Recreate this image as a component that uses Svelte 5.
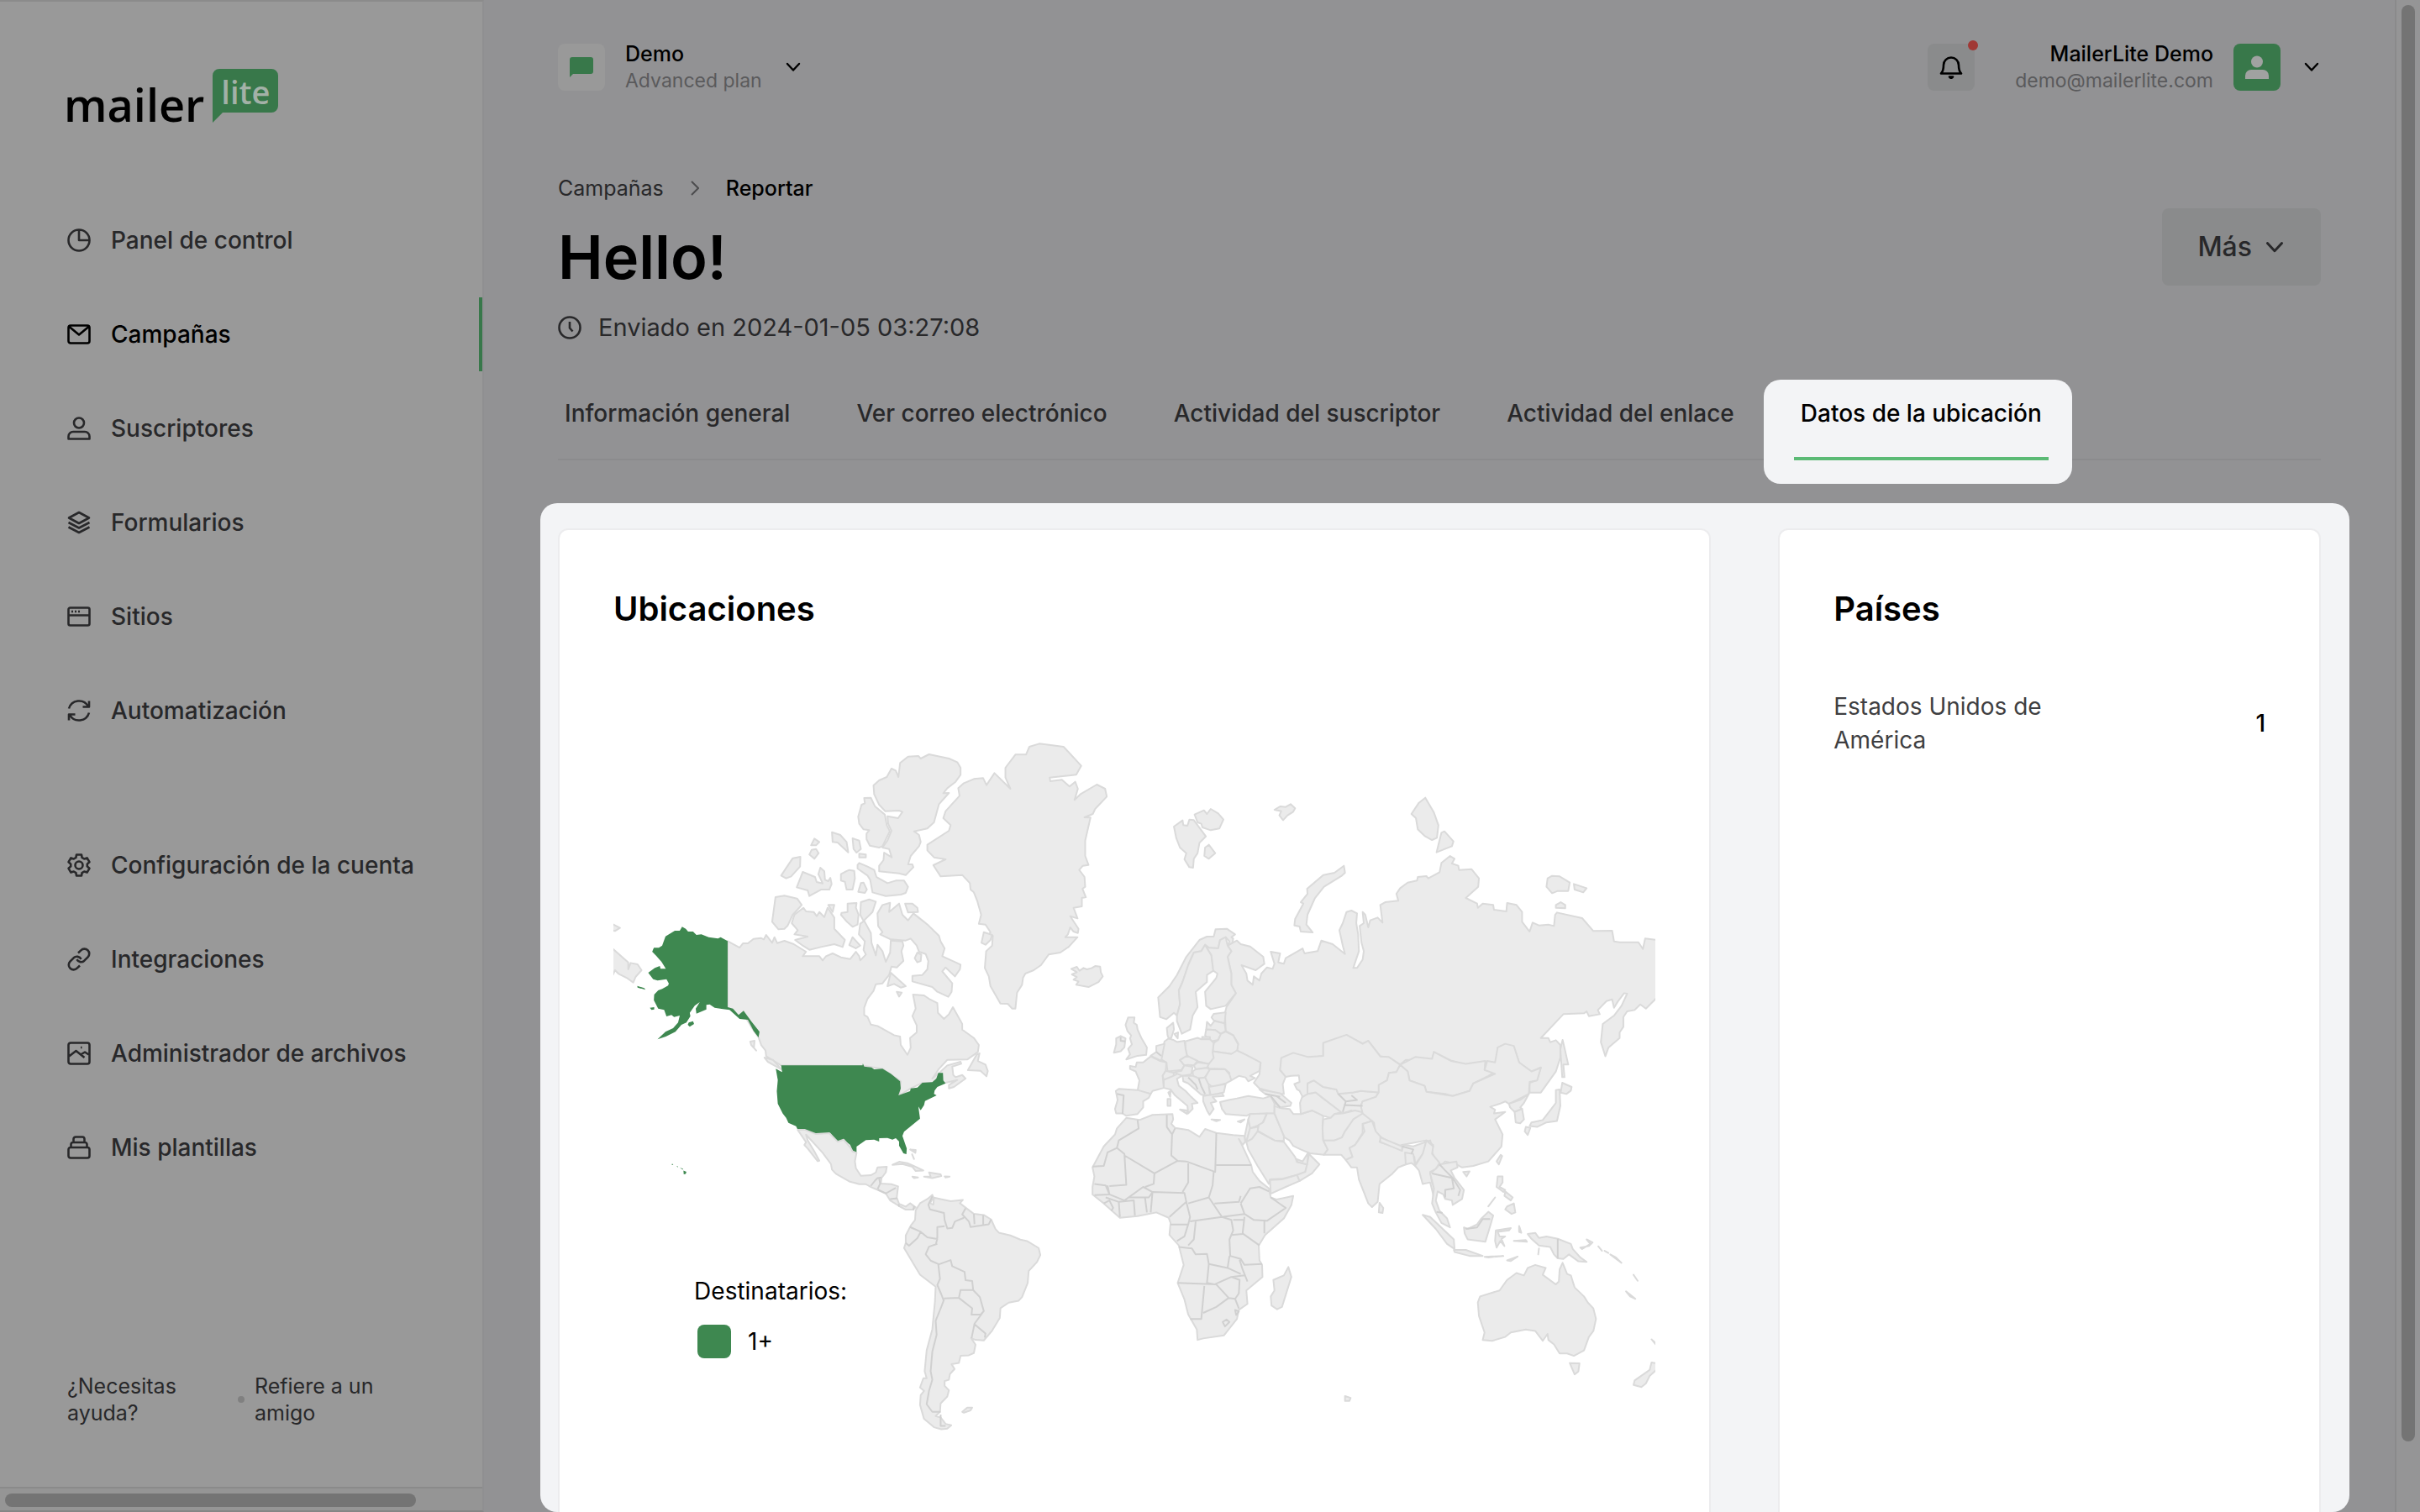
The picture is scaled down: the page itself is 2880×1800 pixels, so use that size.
<script lang="ts">
	type Item = { label: string; icon: string; active?: boolean };

	const icons: Record<string, string> = {
		chart: 'M14 1.5A12.5 12.5 0 1 0 26.5 14 12.5 12.5 0 0 0 14 1.5ZM14 1.5V14H26.5',
		mail: 'M4 3.5H24A2.5 2.5 0 0 1 26.5 6V22A2.5 2.5 0 0 1 24 24.5H4A2.5 2.5 0 0 1 1.5 22V6A2.5 2.5 0 0 1 4 3.5ZM2.5 5 14 14.5 25.5 5',
		user: 'M14 1.5A6 6 0 1 0 20 7.5 6 6 0 0 0 14 1.5ZM1.5 26.5V23.5A5.5 5.5 0 0 1 7 18H21A5.5 5.5 0 0 1 26.5 23.5V26.5Z',
		layers: 'M14 2 26 8.5 14 15 2 8.5ZM1.5 14 14 20.5 26.5 14M1.5 19.5 14 26 26.5 19.5',
		browser: 'M3.5 3.5H24.5A2 2 0 0 1 26.5 5.5V22.5A2 2 0 0 1 24.5 24.5H3.5A2 2 0 0 1 1.5 22.5V5.5A2 2 0 0 1 3.5 3.5ZM1.5 12.5H26.5M5 8H7M9 8H11M13 8H15',
		refresh: 'M2 11.5A12.5 12.5 0 0 1 25 9M26 2.5V9.5H18.5M26 16.5A12.5 12.5 0 0 1 3 19M2 25.5V18.5H9.5',
		gear: 'M11 1.5H17L17.6 4.9 20.2 6.5 23.6 5.4 26.4 10.2 23.8 12.6V15.4L26.4 17.8 23.6 22.6 20.2 21.5 17.6 23.1 17 26.5H11L10.4 23.1 7.8 21.5 4.4 22.6 1.6 17.8 4.2 15.4V12.6L1.6 10.2 4.4 5.4 7.8 6.5 10.4 4.9ZM14 9.5A4.5 4.5 0 1 0 18.5 14 4.5 4.5 0 0 0 14 9.5Z',
		link: 'M13 6.5 16.3 3.4A5.7 5.7 0 0 1 24.6 11.4L20.3 15.7A5.7 5.7 0 0 1 11.4 14.2M15 21.5 11.7 24.6A5.7 5.7 0 0 1 3.4 16.6L7.7 12.3A5.7 5.7 0 0 1 16.6 13.8',
		image: 'M4 1.5H24A2.5 2.5 0 0 1 26.5 4V24A2.5 2.5 0 0 1 24 26.5H4A2.5 2.5 0 0 1 1.5 24V4A2.5 2.5 0 0 1 4 1.5ZM1.5 18 10.5 11 20.5 19M16 15.5 21 12.5 26.5 16M16 7H17.5',
		stack: 'M4 14H24A2.5 2.5 0 0 1 26.5 16.5V24A2.5 2.5 0 0 1 24 26.5H4A2.5 2.5 0 0 1 1.5 24V16.5A2.5 2.5 0 0 1 4 14ZM4.5 14V10.5A2.5 2.5 0 0 1 7 8H21A2.5 2.5 0 0 1 23.5 10.5V14M7.5 8V4A2.5 2.5 0 0 1 10 1.5H18A2.5 2.5 0 0 1 20.5 4V8',
		clock: 'M14 1.5A12.5 12.5 0 1 0 26.5 14 12.5 12.5 0 0 0 14 1.5ZM14 7V14.5L17.5 18.5'
	};

	const menus: Item[][] = [
		[
			{ label: 'Panel de control', icon: 'chart' },
			{ label: 'Campañas', icon: 'mail', active: true },
			{ label: 'Suscriptores', icon: 'user' },
			{ label: 'Formularios', icon: 'layers' },
			{ label: 'Sitios', icon: 'browser' },
			{ label: 'Automatización', icon: 'refresh' }
		],
		[
			{ label: 'Configuración de la cuenta', icon: 'gear' },
			{ label: 'Integraciones', icon: 'link' },
			{ label: 'Administrador de archivos', icon: 'image' },
			{ label: 'Mis plantillas', icon: 'stack' }
		]
	];

	const tabs = [
		'Información general',
		'Ver correo electrónico',
		'Actividad del suscriptor',
		'Actividad del enlace',
		'Datos de la ubicación'
	];
	const currentTab = 'Datos de la ubicación';

	const countries = [{ name: 'Estados Unidos de América', count: 1 }];

	// Each region of the map keeps its own grid, placed by the transform.
	const regions = [
		{
			name: 'north-america',
			transform: 'translate(-10 0) scale(0.3954 0.3333)',
			land: [
				// Canada
				'M369,784 405,807 415,792 430,792 447,776 469,773 478,778 485,762 503,790 510,770 518,791 540,783 568,795 605,822 595,838 645,838 655,853 665,838 685,828 710,842 738,848 755,822 765,838 768,853 785,832 778,815 782,785 764,760 768,722 780,712 800,755 802,790 815,835 820,797 835,820 845,858 858,825 860,782 895,785 898,800 892,820 898,855 878,878 862,875 855,905 835,935 815,938 808,962 790,990 780,1022 780,1048 790,1055 800,1082 820,1087 870,1120 888,1125 890,1155 910,1190 920,1165 918,1130 938,1110 938,1085 925,1052 935,1025 927,975 960,978 975,990 1000,1005 1002,1040 1020,1062 1035,1045 1047,1020 1075,1080 1075,1100 1110,1130 1125,1155 1122,1180 1090,1207 1030,1208 1005,1240 985,1275 1010,1250 1030,1228 1070,1215 1072,1222 1045,1232 1048,1262 1055,1270 1075,1262 1085,1275 1050,1305 1035,1310 1035,1298 1060,1280 1025,1290 985,1290 955,1290 920,1310 885,1336 890,1285 835,1240 780,1230 530,1228 485,1195 483,1175 470,1155 462,1128 440,1090 425,1060 400,1050 369,1020Z',
				'M480,1200 505,1208 532,1243 515,1232 490,1215Z',
				'M437,1143 450,1140 448,1165 455,1175 440,1155Z',
				'M1127,1185 1118,1190 1092,1245 1130,1247 1148,1267 1152,1248 1145,1225 1122,1212Z',
				// Ellesmere and Axel Heiberg
				'M950,132 943,123 912,125 888,148 883,198 875,175 862,168 848,198 825,210 808,228 810,260 825,297 843,320 885,318 895,323 882,345 850,338 852,365 862,390 850,425 835,450 855,455 863,485 840,468 838,495 825,515 825,535 885,542 905,548 928,520 925,510 912,510 920,480 945,445 950,430 945,405 930,392 970,382 990,360 1005,295 1035,255 1018,256 1030,238 1055,215 1070,190 1070,165 1060,145 1035,132 975,117Z',
				'M780,273 800,272 812,302 842,332 848,370 857,392 835,445 825,450 797,443 787,420 787,400 795,388 778,385 765,365 762,340 772,297 782,292Z',
				// Greenland
				'M1205,165 1235,118 1267,118 1277,90 1307,79 1380,90 1433,158 1418,190 1338,200 1340,213 1375,208 1398,232 1415,215 1423,240 1413,280 1430,260 1480,225 1505,240 1510,268 1475,312 1468,330 1443,342 1461,343 1445,425 1445,480 1455,512 1438,515 1427,530 1443,555 1445,590 1437,597 1447,627 1435,630 1435,660 1410,665 1422,703 1400,695 1425,740 1423,755 1410,750 1400,735 1393,760 1385,770 1422,770 1395,805 1370,825 1335,832 1312,870 1290,888 1265,900 1258,915 1255,940 1240,968 1235,1025 1225,1025 1212,1008 1190,1007 1160,945 1155,910 1143,880 1147,820 1165,800 1167,765 1155,762 1160,752 1145,725 1125,722 1132,690 1120,640 1110,610 1100,600 1098,577 1075,548 1010,553 988,513 1025,492 990,485 970,460 970,440 1035,390 1040,370 1018,345 1025,320 1067,265 1063,238 1080,220 1110,205 1138,202 1148,227 1172,184 1220,240 1205,200Z',
				'M1140,752 1165,762 1160,780 1145,797 1133,790Z',
				// Iceland
				'M1403,883 1420,876 1428,890 1440,880 1450,885 1465,880 1475,873 1490,875 1492,895 1498,910 1485,930 1455,948 1418,940 1425,928 1410,922 1420,912 1405,903 1420,895Z',
				// Baffin and the Arctic islands
				'M820,685 835,655 858,647 855,680 885,650 895,690 912,710 928,685 960,715 975,730 1005,765 1010,785 1022,810 1015,838 1070,868 1068,885 1053,910 1025,878 1015,892 1045,935 1043,965 1033,983 1000,965 985,948 925,928 925,908 955,905 970,885 973,855 965,830 945,822 938,800 920,775 905,782 860,778 828,760 835,752 822,730Z',
				'M940,825 952,832 950,855 940,860 932,845Z',
				'M860,897 905,945 890,950 870,937 850,945Z',
				'M878,965 893,968 885,982Z',
				'M903,650 925,650 940,665 942,680 912,682Z',
				'M760,512 765,505 790,518 810,530 817,555 850,577 875,568 900,568 912,590 905,612 890,618 845,623 805,610 798,565 790,550 760,525Z',
				'M725,535 735,530 750,533 752,560 745,600 727,600 722,572 710,568 710,545Z',
				'M770,577 778,575 788,600 782,612 762,608Z',
				'M745,417 765,425 770,455 757,468 748,455Z',
				'M765,472 785,475 785,485 765,485Z',
				'M683,395 708,405 727,430 732,467 700,432 685,430Z',
				'M630,418 645,430 635,442 620,442Z',
				'M622,458 635,455 643,470 630,490 615,475Z',
				'M565,488 588,483 587,518 560,553 545,560 530,550Z',
				'M595,537 632,555 637,573 655,578 642,545 648,522 660,535 662,565 672,570 678,558 682,580 675,600 650,600 615,623 610,603 577,592Z',
				'M513,627 540,622 578,632 592,655 565,690 550,728 540,740 522,742 503,715Z',
				'M597,665 605,678 628,680 637,695 645,680 660,698 670,665 690,700 690,740 722,780 715,805 690,795 650,805 615,815 595,800 572,780 610,768 570,760 580,745 562,720 570,690Z',
				'M730,650 757,648 755,665 763,690 760,725 745,733 728,715 710,690 712,683 730,680Z',
				'M770,645 795,635 815,643 805,680 778,712 768,690Z',
				'M745,770 768,800 755,810 735,798Z',
				'M672,655 690,655 685,680Z',
				// Chukotka, wrapped over the antimeridian
				'M20,808 70,860 70,885 77,862 98,867 110,888 92,912 85,932 65,915 40,900 30,888 20,915Z',
				'M20,722 45,737 30,748 20,745Z'
			],
			borders: '',
			active: [
				// Alaska
				'M369,784 348,770 340,775 312,770 290,760 275,762 265,750 250,750 243,740 232,733 225,747 210,747 182,767 172,800 162,808 147,808 142,822 155,838 170,858 183,883 167,883 165,873 150,880 130,897 145,920 158,925 185,920 192,935 190,943 172,955 160,960 148,975 147,995 160,1025 178,1030 185,1053 200,1048 208,1055 225,1050 220,1075 205,1095 182,1108 158,1135 183,1125 212,1108 230,1083 245,1075 257,1052 255,1040 270,1015 285,1002 273,1025 275,1043 305,1028 305,1012 315,1010 330,1022 355,1027 375,1030 405,1062 430,1065 447,1105 462,1128 465,1108 440,1070 417,1033 402,1048 385,1025 369,1020Z',
				'M252,1075 265,1070 268,1080 255,1090 249,1083Z',
				'M97,944 118,952 122,958 98,950Z',
				'M135,1022 148,1020 148,1028 140,1030Z',
				// Contiguous states
				'M530,1228 775,1228 776,1221 780,1232 802,1235 810,1242 835,1240 860,1258 888,1285 890,1310 883,1335 918,1320 920,1310 940,1307 955,1290 985,1288 997,1275 1003,1255 1017,1255 1018,1282 1025,1292 1000,1305 992,1318 990,1330 998,1335 963,1355 960,1370 950,1388 943,1375 948,1418 900,1465 895,1480 908,1525 907,1545 898,1542 885,1515 885,1500 875,1488 865,1493 850,1487 825,1488 825,1500 810,1493 785,1495 757,1518 757,1540 745,1535 738,1512 718,1493 705,1502 692,1492 678,1470 660,1472 635,1474 602,1458 580,1458 575,1445 552,1433 545,1415 535,1400 520,1365 517,1320 520,1280 514,1240 530,1250 533,1252Z'
			]
		},
		{
			name: 'south-america',
			transform: 'translate(-10 380) scale(0.3954 0.3333)',
			land: [
				'M580,318 602,318 635,333 675,330 700,360 718,353 738,380 745,395 757,400 752,430 755,455 770,482 800,480 815,470 820,452 848,450 845,470 832,490 830,510 862,512 882,520 878,560 885,582 905,592 918,580 935,595 925,603 905,603 885,590 858,570 845,545 800,522 785,512 765,512 735,502 695,475 683,460 680,440 655,400 605,335 610,355 630,395 645,428 640,430 610,385 600,372 605,362Z',
				'M865,443 885,432 910,437 930,447 958,463 935,465 925,450 895,440Z',
				'M960,485 980,485 975,470 1010,477 1012,483 985,490Z',
				'M925,485 942,488 930,490Z',
				'M1022,484 1037,485 1025,488Z',
				'M918,388 935,390 934,400Z',
				'M924,405 930,422Z',
				'M935,605 948,580 970,565 985,550 988,560 978,580 988,585 990,560 1010,565 1040,573 1077,568 1068,580 1090,600 1110,618 1140,622 1162,638 1175,672 1185,685 1220,695 1250,710 1270,715 1305,740 1310,765 1300,790 1275,822 1272,865 1255,915 1245,928 1215,935 1190,955 1188,990 1165,1035 1140,1070 1115,1068 1102,1062 1115,1085 1110,1115 1095,1123 1070,1125 1065,1150 1043,1155 1052,1172 1038,1190 1035,1210 1022,1215 1022,1232 1035,1248 1030,1270 1010,1295 1008,1325 995,1340 1010,1345 1025,1368 1042,1373 1030,1385 1012,1387 990,1380 960,1350 948,1300 950,1265 960,1250 948,1238 958,1205 968,1205 962,1180 968,1105 985,1030 993,930 995,878 948,835 900,740 905,722 905,695 920,660 933,640Z',
				'M1075,1325 1090,1310 1105,1310 1100,1320 1080,1328Z'
			],
			borders:
				'M832,488 820,490 812,500 800,518M825,490 828,510 820,530M822,532 845,545 875,525M858,565 880,562M883,583 885,592M930,590 928,605M985,555 973,585 978,602 1020,615 1022,640 1030,670 1045,668 1053,645 1080,632M1085,598 1075,620 1095,645 1100,665 1130,660 1155,655 1162,638M1110,618 1112,655M1138,622 1138,655M1022,662 1000,665 1000,705M918,665 950,682 970,702 1000,708 995,728M950,682 940,705 915,732 905,722M1000,725 975,735 965,762 980,785 1005,798 1040,783 1045,805 1082,825 1085,855 1105,858 1108,890M1003,798 1008,850 1000,872 1012,905 1020,930M1108,890 1070,890 1065,918 1020,920M1065,918 1105,955 1103,978 1130,978 1140,965 1135,945 1128,915 1108,890M1140,965 1112,1010 1103,1062M1112,1012 1145,1045 1143,1060M1020,925 1012,950 995,1000 998,1050 985,1110 980,1180 985,1210 975,1250 968,1298 985,1325 1010,1325M1010,1335 1010,1375 1025,1375',
			active: [
				'M236,463 245,468 243,475 237,477Z',
				'M201,440 205,440 205,443 201,443Z',
				'M215,447 220,449 219,452Z',
				'M225,453 235,457 234,460Z'
			]
		},
		{
			name: 'northern-eurasia',
			transform: 'translate(550 0) scale(0.4464 0.3333)',
			land: [
				// Russia
				'M405,800 430,782 440,795 465,803 500,840 503,865 480,888 442,870 455,900 458,925 472,940 475,910 490,925 495,900 510,878 525,883 530,865 520,822 545,828 540,860 555,865 560,845 605,810 610,828 645,820 655,782 685,795 718,830 712,800 703,745 712,720 722,680 735,675 750,685 748,720 753,760 755,820 740,880 750,880 765,850 768,820 762,790 757,730 768,720 765,680 772,690 780,735 785,710 805,700 818,718 812,655 825,645 860,640 855,615 865,595 885,575 910,568 912,555 935,552 940,560 970,538 975,505 998,480 1010,490 1003,507 1020,515 1022,530 1055,527 1075,560 1073,590 1040,630 1070,650 1072,665 1085,650 1113,655 1115,672 1148,678 1150,648 1175,655 1190,680 1190,715 1210,750 1218,718 1235,728 1260,725 1275,730 1278,690 1283,682 1350,702 1380,748 1430,747 1435,785 1450,788 1500,788 1512,812 1518,775 1550,780 1550,985 1520,1025 1505,1010 1490,1030 1470,1035 1460,1055 1460,1090 1450,1110 1450,1130 1420,1165 1412,1195 1400,1145 1405,1080 1435,1050 1455,1015 1470,972 1462,970 1445,1000 1435,1022 1430,992 1415,998 1392,1030 1397,1045 1368,1052 1362,1035 1355,1042 1300,1045 1240,1130 1260,1130 1265,1145 1280,1138 1292,1155 1292,1200 1280,1250 1240,1325 1210,1325 1210,1290 1230,1280 1240,1235 1215,1250 1182,1218 1170,1170 1145,1152 1125,1165 1125,1200 1118,1220 1090,1215 1040,1225 1000,1210 955,1180 950,1210 880,1208 865,1225 835,1200 812,1195 780,1140 765,1150 722,1120 660,1150 660,1195 620,1200 580,1185 548,1215 545,1245 560,1268 552,1295 555,1330 545,1330 490,1310 475,1290 490,1260 493,1220 455,1205 430,1180 433,1150 420,1120 400,1105 398,1040 402,1020 427,970 415,940 415,900 405,840 415,820Z',
				'M1298,1137 1303,1165 1313,1225 1300,1225 1303,1270 1297,1270 1292,1170Z',
				'M1297,1290 1322,1305 1320,1318 1308,1330 1293,1325Z',
				'M715,515 718,540 710,550 662,590 638,630 618,690 615,725 632,753 600,750 597,732 583,728 585,705 607,650 600,645 618,615 617,597 660,548 690,540Z',
				'M262,375 285,353 287,370 298,372 303,350 315,352 347,410 330,433 325,470 315,490 313,522 303,520 290,492 295,470 278,450 268,415Z',
				'M317,332 342,317 350,330 360,312 380,328 394,350 383,382 360,388 338,378 335,365 325,360Z',
				'M355,440 372,470 355,490 343,480 345,450Z',
				'M530,315 545,303 560,305 573,295 585,310 580,322 565,335 553,352 543,335 548,320Z',
				'M932,272 955,325 967,370 963,415 950,423 930,408 912,385 907,345 895,330 915,290Z',
				'M983,392 1007,428 1003,445 962,467 975,397Z',
				'M1258,560 1270,551 1290,553 1317,575 1313,605 1285,605 1270,613 1255,590Z',
				'M1328,580 1362,595 1353,610 1330,600Z',
				'M1280,655 1293,645 1305,655 1305,667 1280,665Z',
				// Norway, Sweden, Finland
				'M225,1055 220,985 250,945 270,905 295,840 330,780 350,768 368,768 373,742 403,740 425,760 415,770 420,775 418,790 405,800 410,785 400,770 385,780 380,810 355,808 345,797 335,820 315,825 300,870 285,930 275,960 278,1010 270,1050 262,1040 242,1063Z',
				'M345,797 362,835 367,890 350,905 350,930 320,965 325,1020 312,1050 305,1100 283,1115 270,1070 270,1050 278,1010 275,960 285,930 300,870 315,825 335,820Z',
				'M400,770 385,780 380,810 355,808 345,797 362,835 367,890 378,900 375,915 345,965 348,1015 360,1027 400,1015 427,970 415,940 415,900 405,840 415,820 405,800Z'
			],
			borders: '',
			active: []
		},
		{
			name: 'europe-africa-asia-oceania',
			transform: 'translate(550 320) scale(0.4464 0.3571)',
			land: [
				// Europe
				'M368,78 400,73 397,110 368,100 362,90Z',
				'M348,130 350,105 360,118 370,102 397,110 400,135 387,145 372,132Z',
				'M348,130 372,132 387,145 380,165 362,170 345,150Z',
				'M337,155 358,155 358,163 337,162Z',
				'M400,137 420,150 433,180 430,205 415,212 365,203 368,175 380,165 387,145Z',
				'M365,203 415,212 430,200 455,215 493,240 490,268 465,285 478,292 460,303 453,290 435,285 415,300 405,290 410,275 398,262 355,260 350,250 360,235Z',
				'M292,170 325,158 335,163 358,163 368,175 365,207 368,225 355,245 320,235 297,218 293,195Z',
				'M237,170 248,160 260,165 270,172 290,168 293,195 297,218 278,232 290,250 282,265 245,270 242,240 228,230 230,200Z',
				'M245,150 243,125 260,108 262,130 255,158 248,160Z',
				'M263,145 273,140 272,160Z',
				'M237,178 232,210 228,235 200,218 215,205 215,185Z',
				'M200,220 225,235 242,240 240,268 232,285 235,325 205,335 200,345 165,335 170,300 160,270 145,262 145,252 160,255 163,240 180,240Z',
				'M115,328 165,332 200,345 195,358 180,370 180,390 165,412 135,418 125,410 108,410 105,395 112,365 107,335Z',
				'M140,90 157,90 155,108 163,115 165,130 175,158 190,190 188,215 165,218 135,230 145,213 140,195 150,180 145,160 148,150 138,135 133,115Z',
				'M120,152 133,160 130,190 120,203 102,208 108,180 108,160Z',
				'M232,285 240,268 262,275 260,290 235,298Z',
				'M235,325 235,298 260,285 275,275 285,283 270,295 275,318 293,335 308,355 325,375 310,378 312,395 300,410 298,385 265,350 253,330Z',
				'M278,397 298,400 297,412Z',
				'M245,362 253,362 253,385 245,385Z',
				'M247,340 253,335 252,355Z',
				'M278,232 297,218 325,235 315,250 300,248 290,250Z',
				'M262,273 282,268 290,250 312,255 308,280 285,285Z',
				'M315,250 325,240 355,245 350,258 320,263Z',
				'M312,270 320,263 350,258 358,265 345,290 328,293 313,285Z',
				'M345,290 358,263 398,262 410,280 415,300 400,310 365,322 352,310Z',
				'M285,285 313,285 328,293 345,290 355,315 358,350 335,348 300,310 287,303Z',
				'M355,322 400,312 395,340 360,350Z',
				'M340,352 390,343 395,352 365,355 375,370 360,375 368,395 357,415 350,400 340,370Z',
				'M362,430 385,432 375,436Z',
				'M432,437 450,430 440,440Z',
				// Turkey and the Caucasus
				'M385,372 408,365 430,360 460,352 500,360 520,352 530,375 530,410 465,412 455,418 400,412 390,395Z',
				'M490,330 545,343 575,375 572,385 545,390 530,375 520,352 505,345Z',
				// Middle East
				'M465,412 510,410 497,445 465,460 460,430Z',
				'M460,430 465,460 455,505 450,490Z',
				'M465,460 485,455 488,468 470,495 455,505Z',
				'M510,410 530,410 540,440 555,485 555,502 530,500 485,468 488,448 500,440Z',
				'M455,505 470,495 485,470 530,500 555,505 570,530 585,555 590,572 617,580 612,605 590,615 550,628 518,630 515,645 485,585 460,530Z',
				'M518,632 550,630 590,615 597,635 560,655 520,678Z',
				'M617,580 622,545 650,580 630,610 597,635 590,615 612,605Z',
				'M588,562 605,570 620,540 617,580 592,572Z',
				'M530,385 545,392 570,395 580,412 600,412 630,400 660,418 658,450 660,500 672,530 662,548 625,543 600,530 580,518 570,500 557,490 540,440 530,410Z',
				// Central Asia
				'M600,412 598,375 605,350 618,345 640,340 660,360 712,405 690,412 680,425 660,418 630,400Z',
				'M618,345 618,310 635,300 660,322 695,330 700,345 740,340 760,335 808,340 800,355 765,370 760,385 770,405 745,410 735,400 712,410 660,360 640,340Z',
				'M545,265 548,225 580,208 620,222 660,218 660,175 722,148 765,178 780,168 812,220 835,222 865,248 855,272 835,275 830,300 808,315 808,340 760,335 740,340 700,345 695,330 660,322 635,300 618,310 618,345 605,355 597,335 590,330 583,312 597,305 595,283 575,285 560,288Z',
				'M660,430 680,425 690,412 712,410 745,400 770,408 740,430 735,455 718,470 710,490 690,500 660,500 658,460Z',
				'M662,548 672,530 660,500 690,500 710,490 718,470 740,430 765,410 795,435 765,445 765,475 745,515 730,525 738,555 720,565 708,548Z',
				// Mongolia and China
				'M865,248 905,222 950,228 955,205 1000,235 1040,245 1092,235 1090,265 1118,272 1100,285 1060,310 1050,335 1005,352 985,345 935,338 930,318 890,300 885,270Z',
				'M865,248 885,270 890,300 930,318 935,338 1005,352 1050,335 1060,310 1118,278 1090,265 1097,235 1118,240 1125,190 1145,178 1168,185 1182,240 1215,270 1240,258 1230,300 1210,305 1208,345 1155,378 1145,370 1130,378 1105,388 1118,398 1115,410 1145,405 1118,430 1138,480 1135,520 1100,570 1060,585 1030,590 1015,580 985,570 970,590 950,540 953,515 935,500 870,515 860,520 815,490 800,480 795,440 765,410 760,385 765,370 800,355 808,340 808,315 830,300 835,275 855,272Z',
				// Korea, Japan, Taiwan, Hainan
				'M1155,378 1185,365 1208,345 1195,375 1185,390 1190,395 1170,405 1158,390Z',
				'M1170,405 1190,395 1195,430 1185,443 1173,440Z',
				'M1280,332 1290,330 1292,385 1283,435 1255,440 1230,455 1210,452 1215,440 1245,432 1265,400 1280,375Z',
				'M1200,455 1212,458 1205,482 1197,470Z',
				'M1033,605 1050,603 1042,620Z',
				'M1133,548 1137,552 1128,580 1122,570Z',
				// India and its neighbours
				'M720,565 738,555 730,525 745,515 770,470 765,445 790,435 800,470 815,490 810,505 870,530 875,515 900,520 945,500 950,520 925,545 905,580 903,555 880,550 880,580 860,590 845,610 810,645 805,705 790,722 780,710 755,630 750,590 735,590Z',
				'M812,490 870,520 870,535 812,505Z',
				'M878,540 900,545 905,585 895,575 880,580Z',
				'M810,708 820,725 818,742 808,740Z',
				'M905,585 925,545 935,500 953,520 950,545 970,575 960,595 945,605 950,640 957,660 955,690 945,640 925,645 915,600Z',
				'M960,595 970,580 1015,570 1018,590 1000,600 1010,625 1035,665 1030,695 1005,715 1003,700 985,695 980,680 965,670 960,700 970,735 990,760 998,790 975,775 960,740 950,710 955,660 945,610Z',
				// Indonesia, Borneo, Philippines
				'M925,748 945,755 1008,830 1010,862 990,845 960,795Z',
				'M1008,865 1040,865 1085,885 1050,885 1010,872Z',
				'M1035,790 1045,795 1070,780 1080,762 1100,738 1113,750 1105,785 1092,838 1045,830 1037,810Z',
				'M1120,800 1160,792 1155,800 1125,805 1130,820 1145,820 1135,828 1143,852 1132,835 1122,857 1118,835Z',
				'M1090,888 1140,885 1100,890Z',
				'M1150,900 1178,887 1160,902Z',
				'M1182,785 1188,808 1182,805Z',
				'M1168,835 1200,832 1203,838Z',
				'M1235,860 1233,880Z',
				'M1125,620 1138,620 1138,640 1130,655 1145,665 1140,672 1122,655Z',
				'M1145,670 1165,690 1160,700 1143,685Z',
				'M1150,720 1168,710 1172,740 1162,745 1145,730Z',
				'M1118,690 1100,720Z',
				// New Guinea and the Pacific
				'M1205,812 1225,808 1235,825 1255,820 1285,828 1320,845 1325,862 1345,890 1362,905 1340,903 1315,880 1300,895 1285,893 1275,880 1265,855 1235,850 1215,828Z',
				'M1345,857 1368,852 1378,840 1362,830 1372,845 1350,862Z',
				'M1393,853 1403,868Z',
				'M1410,868 1420,875Z',
				'M1425,880 1440,890 1455,908Z',
				'M1487,948 1498,968Z',
				'M1467,1003 1492,1028 1478,1020Z',
				// Australia and New Zealand
				'M1298,908 1310,945 1320,950 1330,990 1355,1020 1365,1040 1380,1060 1387,1095 1380,1135 1368,1155 1355,1200 1328,1218 1310,1210 1290,1210 1275,1180 1260,1165 1258,1145 1245,1168 1225,1135 1200,1130 1160,1140 1145,1155 1110,1168 1085,1165 1090,1140 1075,1085 1072,1040 1078,1020 1130,1000 1150,965 1175,942 1195,950 1205,925 1225,915 1253,925 1245,948 1280,980 1288,970 1290,930Z',
				'M1317,1242 1343,1243 1340,1270 1330,1280Z',
				'M1550,1243 1535,1240 1530,1265 1490,1300 1487,1315 1508,1322 1520,1310 1530,1285 1550,1262Z',
				'M1535,1163 1550,1180 1550,1186Z',
				// Africa
				'M135,425 170,432 205,415 258,412 260,430 255,445 265,458 300,465 330,488 345,462 375,475 420,482 450,485 452,505 445,515 435,495 445,520 468,582 472,605 490,635 515,660 520,690 535,697 580,685 575,715 555,760 505,815 488,850 490,900 497,915 498,955 455,1000 458,1045 435,1065 430,1095 395,1150 340,1160 325,1165 323,1130 300,1080 290,1030 272,975 288,915 275,850 250,815 253,775 248,758 215,740 165,752 118,758 75,710 45,680 45,655 50,620 45,590 75,520 105,480 110,460Z',
				'M567,922 575,955 550,1055 537,1063 522,1050 520,1020 530,1000 527,965 555,950Z',
				'M718,1352 733,1358 730,1368 718,1368Z'
			],
			borders:
				'M165,432 168,460 115,500 110,525 85,540 75,585 45,587M110,525 130,545 135,648 90,652M130,550 210,610 272,568 295,570M243,415 243,455 257,480 255,550 272,568M257,480 265,460M295,570 372,605 375,475M375,582 468,582M210,610 208,645 185,655M300,570 300,640 285,672M85,650 90,680 130,700M50,645 80,650 90,680 50,682M80,690 115,705 118,755M115,705 155,700 158,750M185,692 190,740M205,670 200,740M130,700 180,655 205,672 195,690 140,690M205,672 290,675 295,705 250,755M75,710 90,700 100,725 95,735M368,605 365,650 355,690 300,710M295,705 305,755 300,780M355,690 390,755 305,770M370,710 435,705 440,685M440,710 465,660 490,655 515,670M440,710 450,745 390,755M450,745 475,765 510,768 560,725 520,690M503,768 503,810M390,755 415,765 420,800 410,830 412,885M410,885 405,925 355,912 350,878 320,880 310,860 275,855M320,770 315,830 300,850M253,780 300,780 290,820 270,835M450,755 445,810 490,850M420,765 450,765M415,815 445,812M412,885 440,895 450,915 497,912M405,925 440,945M355,912 350,975 370,980 415,955 450,950M437,898 445,930 458,970M272,975 375,980M343,985 335,1095 305,1095M375,980 408,1025 375,1055 340,1075M415,955 437,965 435,1010 425,1028 408,1025M425,1028 435,1060M392,1105 402,1097 410,1105 398,1120ZM425,1065 435,1070 428,1082ZM110,345 128,350 125,412M215,205 228,218M300,290 320,315 325,330M328,293 335,320 345,345M505,345 545,355M520,352 545,390M535,352 560,375M700,345 720,370 712,405M720,370 750,365 735,350M715,382 765,385M950,610 985,620 1003,625 1008,660 985,665 985,690M970,580 985,600 1005,625 1025,665 1020,685M962,738 978,742M1040,795 1070,790 1085,762 1105,762M1285,828 1285,893M120,155 120,168 132,170M870,520 900,530 895,545',
			active: []
		}
	];
</script>

{#snippet icon(name: string)}
	<svg class="icon" viewBox="0 0 28 28" aria-hidden="true"><path d={icons[name]} /></svg>
{/snippet}

{#snippet chevron()}
	<svg class="chevron" viewBox="0 0 18 12" aria-hidden="true"><path d="M2 2 9 9.500 16 2" /></svg>
{/snippet}

<div class="app">
	<aside class="sidebar">
		<a class="logo" href="#home" aria-label="mailerlite">
			<span class="logo-mailer">mailer</span>
			<span class="logo-lite">
				<svg viewBox="0 0 78 64" aria-hidden="true">
					<path d="M8 0H70A8 8 0 0 1 78 8V44A8 8 0 0 1 70 52H12L0 64V8A8 8 0 0 1 8 0Z" />
				</svg>
				<span>lite</span>
			</span>
		</a>

		<nav class="menus" aria-label="Principal">
			{#each menus as menu}
				<ul>
					{#each menu as item}
						<li>
							<a href="#{item.icon}" class:active={item.active}>
								{@render icon(item.icon)}
								{item.label}
							</a>
						</li>
					{/each}
				</ul>
			{/each}
		</nav>

		<div class="help">
			<a href="#help">¿Necesitas ayuda?</a>
			<span class="bullet"></span>
			<a href="#refer">Refiere a un amigo</a>
		</div>
		<div class="scroll-x"><div class="thumb"></div></div>
	</aside>

	<main>
		<header class="topbar">
			<button class="account" type="button">
				<span class="brand">
					<svg viewBox="0 0 28 24" aria-hidden="true">
						<path d="M3 0H25A3 3 0 0 1 28 3V17A3 3 0 0 1 25 20H4L0 24V3A3 3 0 0 1 3 0Z" />
					</svg>
				</span>
				<span class="who">
					<strong>Demo</strong>
					<small>Advanced plan</small>
				</span>
				{@render chevron()}
			</button>

			<div class="right">
				<button class="bell" type="button" aria-label="Notificaciones">
					<svg viewBox="0 0 28 28" aria-hidden="true">
						<path d="M2 21.5C4.5 19 5 17 5 11.5A9 9 0 0 1 23 11.5C23 17 23.5 19 26 21.5Z" />
						<path d="M12 25.500A2.200 2.200 0 0 0 16 25.500Z" />
					</svg>
					<span class="alert"></span>
				</button>
				<button class="account user" type="button">
					<span class="who">
						<strong>MailerLite Demo</strong>
						<small>demo@mailerlite.com</small>
					</span>
					<span class="avatar">
						<svg viewBox="0 0 28 28" aria-hidden="true">
							<circle cx="14" cy="7.5" r="7" />
							<path d="M0 28V24A7 7 0 0 1 7 17H21A7 7 0 0 1 28 24V28Z" />
						</svg>
					</span>
					{@render chevron()}
				</button>
			</div>
		</header>

		<section class="title">
			<div>
				<nav class="crumbs" aria-label="Ruta">
					<a href="#campaigns">Campañas</a>
					<svg viewBox="0 0 10 18" aria-hidden="true"><path d="M1 1 9 9 1 17" /></svg>
					<span>Reportar</span>
				</nav>
				<h1>Hello!</h1>
				<p class="sent">{@render icon('clock')} Enviado en 2024-01-05 03:27:08</p>
			</div>
			<button class="more" type="button">Más {@render chevron()}</button>
		</section>

		<nav class="tabs" aria-label="Informe">
			{#each tabs as tab}
				<a href="#tab" class:current={tab === currentTab}>{tab}</a>
			{/each}
		</nav>

		<section class="panel">
			<article class="card">
				<h2>Ubicaciones</h2>
				<figure class="map">
					<svg viewBox="0 0 1240 860" role="img" aria-label="Ubicaciones">
						{#each regions as region}
							<g transform={region.transform}>
								{#each region.land as d}<path class="land" {d} />{/each}
								{#if region.borders}<path class="border" d={region.borders} />{/if}
								{#each region.active as d}<path class="reached" {d} />{/each}
							</g>
						{/each}
					</svg>
					<figcaption class="legend">
						<span>Destinatarios:</span>
						<span class="key"><i></i>1+</span>
					</figcaption>
				</figure>
			</article>

			<article class="card">
				<h2>Países</h2>
				<table>
					<tbody>
						{#each countries as country}
							<tr>
								<th scope="row">{country.name}</th>
								<td>{country.count}</td>
							</tr>
						{/each}
					</tbody>
				</table>
			</article>
		</section>
	</main>

	<div class="scroll-y"><div class="thumb"></div></div>
</div>

<style>
	:global(body) {
		background: #929294;
	}

	.app {
		--green: #38784a;
		--text: #28282a;
		--muted: #5a5a5c;
		display: flex;
		min-height: 100vh;
		font-family: Inter, 'Noto Sans', sans-serif;
		font-size: 28px;
		line-height: 40px;
		color: var(--text);
	}

	.app :global(*) {
		box-sizing: border-box;
	}

	a {
		color: inherit;
		text-decoration: none;
	}

	button {
		border: 0;
		padding: 0;
		background: none;
		font: inherit;
		color: inherit;
	}

	.icon {
		flex: none;
		width: 28px;
		height: 28px;
		fill: none;
		stroke: currentColor;
		stroke-width: 2.6;
		stroke-linejoin: round;
	}

	.chevron {
		flex: none;
		width: 18px;
		height: 12px;
		fill: none;
		stroke: currentColor;
		stroke-width: 2.4;
		stroke-linecap: round;
		stroke-linejoin: round;
	}

	/* Sidebar */
	.sidebar {
		display: flex;
		flex-direction: column;
		flex: none;
		width: 576px;
		border-top: 2px solid #8b8b8b;
		border-right: 2px solid #8f8f91;
		border-bottom: 2px solid #858585;
		background: #999;
	}

	.logo {
		display: flex;
		align-items: flex-end;
		gap: 10px;
		margin: 80px 80px 0;
		font-family: 'Open Sans', sans-serif;
		color: #000;
	}

	.logo-mailer {
		height: 54px;
		margin-left: -4px;
		font-size: 54px;
		font-weight: 600;
		line-height: 64px;
	}

	.logo-lite {
		display: grid;
		width: 78px;
		height: 64px;
	}

	.logo-lite > * {
		grid-area: 1 / 1;
	}

	.logo-lite svg {
		fill: var(--green);
	}

	.logo-lite span {
		font-size: 38px;
		font-weight: 600;
		line-height: 54px;
		text-align: center;
		color: #a3b1a7;
	}

	.menus {
		margin-top: 96px;
	}

	.menus ul {
		display: grid;
		gap: 24px;
		margin: 0 0 96px;
		padding: 0;
		list-style: none;
	}

	.menus a {
		display: flex;
		align-items: center;
		gap: 24px;
		height: 88px;
		padding-left: 80px;
		border-right: 4px solid transparent;
		font-weight: 500;
	}

	.menus a.active {
		border-color: var(--green);
		color: #000;
	}

	.help {
		display: flex;
		align-items: center;
		gap: 12px;
		margin: auto 80px 72px;
		font-size: 25px;
		line-height: 32px;
	}

	.help a {
		width: 192px;
	}

	.bullet {
		flex: none;
		width: 8px;
		height: 8px;
		border-radius: 50%;
		background: #808080;
	}

	.scroll-x {
		height: 28px;
		padding: 6px;
		border-top: 2px solid #8a8a8a;
		background: #959595;
	}

	.thumb {
		border-radius: 8px;
		background: #747474;
	}

	.scroll-x .thumb {
		width: 87%;
		height: 16px;
	}

	.scroll-y {
		display: flex;
		flex-direction: column;
		flex: none;
		width: 30px;
		padding: 6px;
		border-left: 2px solid #8a8a8b;
		background: #959596;
	}

	.scroll-y .thumb {
		flex: 22;
		width: 16px;
	}

	.scroll-y::after {
		content: '';
		flex: 1;
	}

	/* Header */
	main {
		display: flex;
		flex: 1;
		flex-direction: column;
		min-width: 0;
		padding: 52px 54px 0 67px;
	}

	.topbar,
	.title,
	.tabs {
		margin: 0 34px 0 21px;
	}

	.topbar {
		display: flex;
		justify-content: space-between;
		height: 56px;
	}

	.right,
	.account {
		display: flex;
		align-items: center;
	}

	.right {
		gap: 48px;
	}

	.account {
		gap: 24px;
		text-align: left;
		color: #000;
	}

	.account .chevron {
		margin: 0 2px 0 4px;
	}

	.account.user {
		text-align: right;
	}

	.who {
		display: grid;
		font-size: 25px;
		line-height: 32px;
	}

	.who strong {
		font-weight: 500;
	}

	.who small {
		font-size: 23px;
		color: var(--muted);
	}

	.brand,
	.avatar,
	.bell {
		display: grid;
		place-items: center;
		width: 56px;
		height: 56px;
		border-radius: 8px;
	}

	.brand {
		background: #999;
	}

	.brand svg {
		width: 28px;
		height: 24px;
		fill: var(--green);
	}

	.avatar {
		background: var(--green);
	}

	.avatar svg {
		width: 28px;
		height: 28px;
		fill: #a0a2a1;
	}

	.bell {
		position: relative;
		background: #8a8b8c;
	}

	.bell svg {
		width: 28px;
		height: 28px;
		fill: none;
		stroke: #000;
		stroke-width: 2.6;
		stroke-linecap: round;
		stroke-linejoin: round;
	}

	.alert {
		position: absolute;
		top: -4px;
		right: -4px;
		width: 12px;
		height: 12px;
		border-radius: 50%;
		background: #a03835;
	}

	.title {
		display: flex;
		justify-content: space-between;
		align-items: flex-start;
		margin-top: 100px;
	}

	.crumbs {
		display: flex;
		align-items: center;
		gap: 32px;
		font-size: 25px;
		line-height: 32px;
	}

	.crumbs svg {
		width: 10px;
		height: 18px;
		fill: none;
		stroke: #4c4c4e;
		stroke-width: 2;
	}

	.crumbs span {
		font-weight: 500;
		color: #000;
	}

	h1 {
		margin: 22px 0 20px;
		font-size: 72px;
		font-weight: 600;
		line-height: 88px;
		color: #000;
	}

	.sent {
		display: flex;
		align-items: center;
		gap: 20px;
		margin: 0;
		font-size: 29px;
	}

	.more {
		display: flex;
		align-items: center;
		gap: 16px;
		height: 92px;
		margin-top: 40px;
		padding: 0 44px 0 42px;
		border-radius: 8px;
		background: #8a8b8c;
		font-size: 32px;
		font-weight: 500;
	}

	.more .chevron {
		width: 22px;
		height: 15px;
	}

	/* The selected tab and the panel below it stay lit while the page is dimmed */
	.tabs {
		display: flex;
		gap: 63px;
		isolation: isolate;
		margin-top: 62px;
		box-shadow: inset 0 -2px #8b8b8d;
	}

	.tabs a {
		position: relative;
		padding: 0 8px 32px;
		border-bottom: 4px solid transparent;
		font-weight: 500;
	}

	.tabs a.current {
		border-color: #5bba75;
		color: #000;
	}

	.tabs a.current::before {
		content: '';
		position: absolute;
		z-index: -1;
		inset: -20px -28px -32px -36px;
		border-radius: 20px;
		background: #f3f4f6;
	}

	.panel {
		display: grid;
		grid-template-columns: 17fr 8fr;
		gap: 80px;
		flex: 1;
		margin-top: 51px;
		padding: 30px 34px 0 21px;
		border-radius: 20px;
		background: #f3f4f6;
	}

	.card {
		padding: 70px 64px 0;
		border: 2px solid #ececee;
		border-bottom: 0;
		border-radius: 12px 12px 0 0;
		background: #fff;
	}

	h2 {
		margin: 0;
		font-size: 40px;
		font-weight: 600;
		line-height: 48px;
		color: #000;
	}

	.map {
		position: relative;
		margin: 110px 0 0;
	}

	.map svg {
		display: block;
		width: 100%;
	}

	.map path {
		stroke-width: 2;
		stroke-linejoin: round;
		vector-effect: non-scaling-stroke;
	}

	.land {
		fill: #ebebeb;
		stroke: #dadada;
	}

	.border {
		fill: none;
		stroke: #d0d0d0;
	}

	.reached {
		fill: #3e8850;
	}

	.legend {
		position: absolute;
		top: 76.5%;
		left: 7.75%;
		display: grid;
		gap: 20px;
		color: #000;
	}

	.key {
		display: flex;
		gap: 20px;
		padding-left: 4px;
	}

	.key i {
		width: 40px;
		height: 40px;
		border-radius: 8px;
		background: #3e8850;
	}

	table {
		width: 100%;
		margin-top: 72px;
		border-collapse: collapse;
	}

	th {
		width: 60%;
		padding: 0;
		font-weight: 400;
		text-align: left;
		color: #3f3f42;
	}

	td {
		padding: 0;
		font-weight: 500;
		text-align: right;
		color: #000;
	}
</style>
